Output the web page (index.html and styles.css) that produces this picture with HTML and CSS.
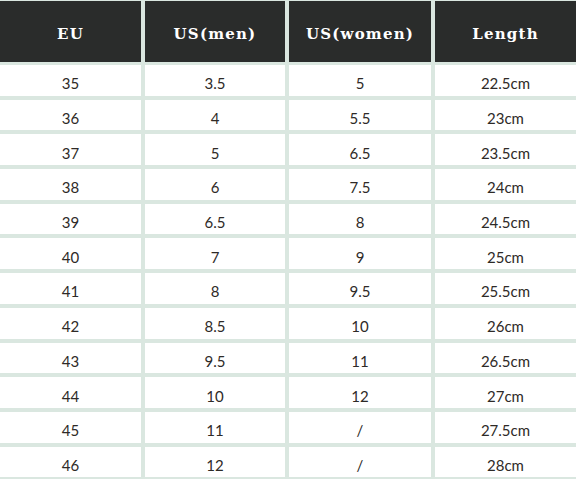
FILE: index.html
```html
<!DOCTYPE html>
<html>
<head>
<meta charset="utf-8">
<link rel="stylesheet" href="styles.css">
</head>
<body>
<div class="table">
  <div class="cell head">EU</div>
  <div class="cell head">US(men)</div>
  <div class="cell head">US(women)</div>
  <div class="cell head">Length</div>

  <div class="cell">35</div><div class="cell">3.5</div><div class="cell">5</div><div class="cell">22.5cm</div>
  <div class="cell">36</div><div class="cell">4</div><div class="cell">5.5</div><div class="cell">23cm</div>
  <div class="cell">37</div><div class="cell">5</div><div class="cell">6.5</div><div class="cell">23.5cm</div>
  <div class="cell">38</div><div class="cell">6</div><div class="cell">7.5</div><div class="cell">24cm</div>
  <div class="cell">39</div><div class="cell">6.5</div><div class="cell">8</div><div class="cell">24.5cm</div>
  <div class="cell">40</div><div class="cell">7</div><div class="cell">9</div><div class="cell">25cm</div>
  <div class="cell">41</div><div class="cell">8</div><div class="cell">9.5</div><div class="cell">25.5cm</div>
  <div class="cell">42</div><div class="cell">8.5</div><div class="cell">10</div><div class="cell">26cm</div>
  <div class="cell">43</div><div class="cell">9.5</div><div class="cell">11</div><div class="cell">26.5cm</div>
  <div class="cell">44</div><div class="cell">10</div><div class="cell">12</div><div class="cell">27cm</div>
  <div class="cell">45</div><div class="cell">11</div><div class="cell">/</div><div class="cell">27.5cm</div>
  <div class="cell">46</div><div class="cell">12</div><div class="cell">/</div><div class="cell">28cm</div>
</div>
</body>
</html>
```
FILE: styles.css
```css
html, body {
  margin: 0;
  padding: 0;
  background: #dae7e0;
}
body {
  width: 576px;
  height: 479px;
  overflow: hidden;
}
.table {
  display: grid;
  grid-template-columns: 141px 140px 142px 141px;
  grid-template-rows: 60px repeat(12, 30.7px);
  column-gap: 4px;
  row-gap: 4px;
  padding-top: 1px;
  width: 576px;
}
.cell {
  background: #ffffff;
  display: flex;
  align-items: center;
  justify-content: center;
  padding-top: 6px;
  font-family: Lato, "Noto Sans", sans-serif;
  font-size: 15px;
  color: #2e2a27;
}
.head {
  background: #2a2c2b;
  color: #ffffff;
  padding-top: 4px;
  margin-bottom: -1px;
  font-family: "DejaVu Serif", serif;
  font-weight: bold;
  font-size: 15px;
  letter-spacing: 1.2px;
}
```
